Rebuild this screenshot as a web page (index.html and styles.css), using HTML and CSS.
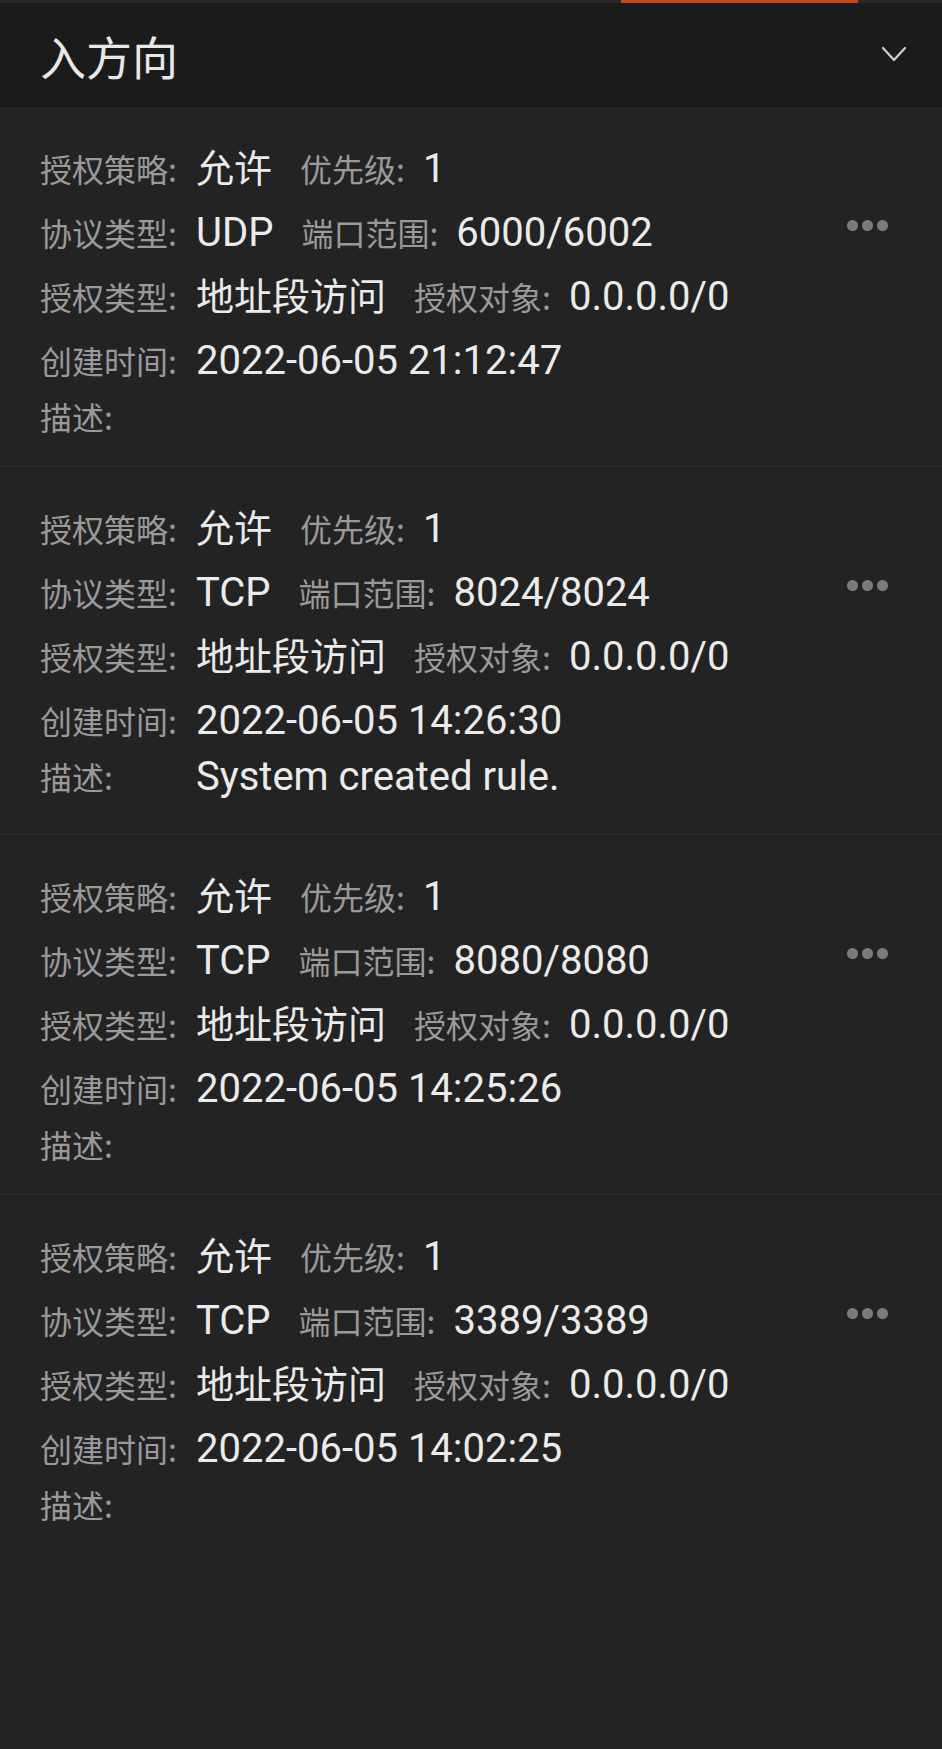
FILE: index.html
```html
<!DOCTYPE html>
<html lang="zh-CN">
<head>
<meta charset="utf-8">
<title>入方向</title>
<link rel="stylesheet" href="styles.css">
</head>
<body>
<div class="topbar"><span class="indicator"></span></div>
<header class="header">
  <h1 class="title">入方向</h1>
  <svg class="chevron" width="26" height="17" viewBox="0 0 26 17"><polyline points="2,2 13,14 24,2" fill="none" stroke="#cfcfcf" stroke-width="2.2" stroke-linecap="round" stroke-linejoin="round"/></svg>
</header>
<main class="list">
  <section class="card">
    <div class="fields">
      <div class="row"><span class="k">授权策略:</span><span class="v zh">允许</span><span class="k2">优先级:</span><span class="v">1</span></div>
      <div class="row"><span class="k">协议类型:</span><span class="v">UDP</span><span class="k2">端口范围:</span><span class="v">6000/6002</span></div>
      <div class="row"><span class="k">授权类型:</span><span class="v zh">地址段访问</span><span class="k2">授权对象:</span><span class="v">0.0.0.0/0</span></div>
      <div class="row"><span class="k">创建时间:</span><span class="v">2022-06-05 21:12:47</span></div>
      <div class="row desc"><span class="k">描述:</span></div>
    </div>
    <div class="more"><i></i><i></i><i></i></div>
  </section>
  <section class="card">
    <div class="fields">
      <div class="row"><span class="k">授权策略:</span><span class="v zh">允许</span><span class="k2">优先级:</span><span class="v">1</span></div>
      <div class="row"><span class="k">协议类型:</span><span class="v">TCP</span><span class="k2">端口范围:</span><span class="v">8024/8024</span></div>
      <div class="row"><span class="k">授权类型:</span><span class="v zh">地址段访问</span><span class="k2">授权对象:</span><span class="v">0.0.0.0/0</span></div>
      <div class="row"><span class="k">创建时间:</span><span class="v">2022-06-05 14:26:30</span></div>
      <div class="row desc"><span class="k">描述:</span><span class="v desc-text">System created rule.</span></div>
    </div>
    <div class="more"><i></i><i></i><i></i></div>
  </section>
  <section class="card">
    <div class="fields">
      <div class="row"><span class="k">授权策略:</span><span class="v zh">允许</span><span class="k2">优先级:</span><span class="v">1</span></div>
      <div class="row"><span class="k">协议类型:</span><span class="v">TCP</span><span class="k2">端口范围:</span><span class="v">8080/8080</span></div>
      <div class="row"><span class="k">授权类型:</span><span class="v zh">地址段访问</span><span class="k2">授权对象:</span><span class="v">0.0.0.0/0</span></div>
      <div class="row"><span class="k">创建时间:</span><span class="v">2022-06-05 14:25:26</span></div>
      <div class="row desc"><span class="k">描述:</span></div>
    </div>
    <div class="more"><i></i><i></i><i></i></div>
  </section>
  <section class="card">
    <div class="fields">
      <div class="row"><span class="k">授权策略:</span><span class="v zh">允许</span><span class="k2">优先级:</span><span class="v">1</span></div>
      <div class="row"><span class="k">协议类型:</span><span class="v">TCP</span><span class="k2">端口范围:</span><span class="v">3389/3389</span></div>
      <div class="row"><span class="k">授权类型:</span><span class="v zh">地址段访问</span><span class="k2">授权对象:</span><span class="v">0.0.0.0/0</span></div>
      <div class="row"><span class="k">创建时间:</span><span class="v">2022-06-05 14:02:25</span></div>
      <div class="row desc"><span class="k">描述:</span></div>
    </div>
    <div class="more"><i></i><i></i><i></i></div>
  </section>
</main>
</body>
</html>
```
FILE: styles.css
```css
html, body {
  margin: 0;
  padding: 0;
  background: #222322;
}
body {
  min-height: 1749px;
  font-family: Roboto, "Noto Sans CJK SC", sans-serif;
  color: #ebebeb;
}
.topbar {
  height: 3px;
  background: #282828;
  padding-left: 621px;
}
.indicator {
  display: block;
  width: 237px;
  height: 3px;
  background: #c9471a;
}
.header {
  height: 103px;
  background: #1b1b1b;
  border-bottom: 1px solid #161716;
  display: flex;
  align-items: center;
  justify-content: space-between;
  padding: 0 35px 0 40px;
}
.title {
  margin: 0;
  font-family: "Noto Sans CJK SC", sans-serif;
  font-weight: 400;
  font-size: 46px;
  color: #e8e8e8;
}
.chevron {
  display: block;
}
.card {
  display: flex;
  padding: 30px 54px 25px 40px;
  border-bottom: 1px solid #2c2d2c;
}
.card:last-child {
  border-bottom: none;
}
.fields {
  flex: 1;
}
.row {
  height: 64px;
  line-height: 64px;
  font-size: 40px;
  white-space: nowrap;
}
.row.desc {
  height: auto;
  min-height: 48px;
  line-height: 48px;
}
.k, .k2 {
  font-family: "Noto Sans CJK SC", sans-serif;
  font-size: 32px;
  line-height: 1;
  color: #9a9a9a;
}
.k {
  display: inline-block;
  width: 156px;
}
.k2 {
  margin-left: 28px;
  margin-right: 18px;
}
.v {
  line-height: 1;
  color: #ebebeb;
}
.v.zh {
  font-size: 38px;
}
.desc-text {
  display: inline-block;
  padding-bottom: 12px;
}
.more {
  display: flex;
  gap: 4px;
  margin-top: 83px;
  height: 11px;
}
.more i {
  display: block;
  width: 11px;
  height: 11px;
  border-radius: 50%;
  background: #7b7b7b;
}
```
